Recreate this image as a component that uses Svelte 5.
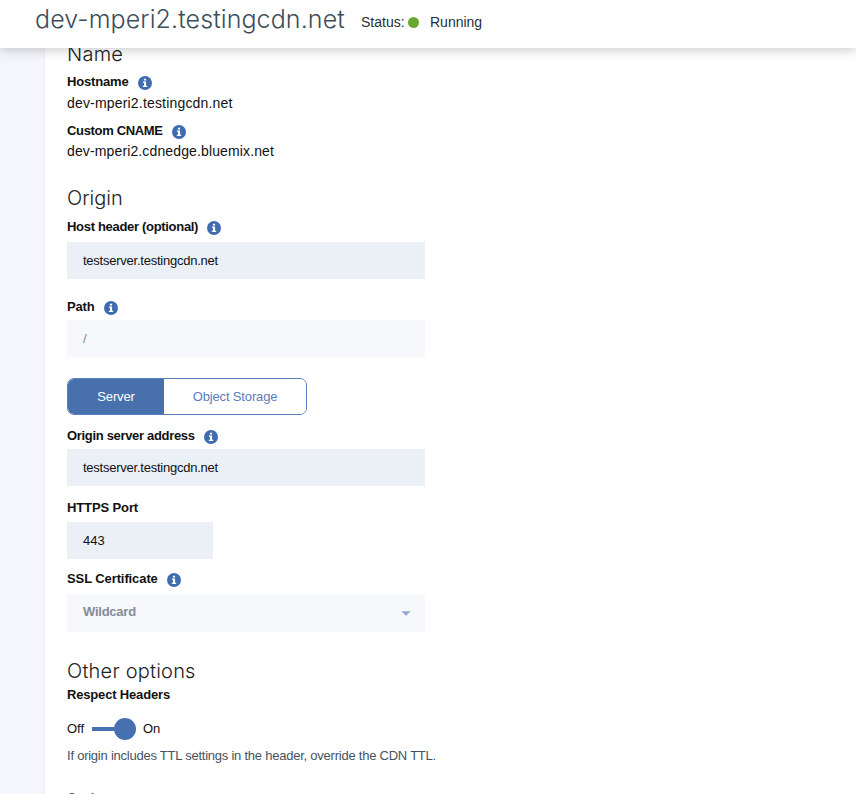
<script>
  const host = 'testserver.testingcdn.net';
</script>

{#snippet info()}
  <svg class="info" viewBox="0 0 14 14" aria-hidden="true">
    <circle cx="7" cy="7" r="7" fill="#3f6cb1" />
    <path d="M5.9 2.7h2.2v1.8H5.9zM4.9 5.6h3.2v4.2h1.1v1.2H4.8V9.8H6V6.8H4.9z" fill="#fff" />
  </svg>
{/snippet}

{#snippet label(text, spacing, mt, icon = true)}
  <div class="label" style:margin-top="{mt}px">
    <span style:letter-spacing="{spacing}px">{text}</span>
    {#if icon}{@render info()}{/if}
  </div>
{/snippet}

<div class="page">
  <header>
    <h1>dev-mperi2.testingcdn.net</h1>
    <span class="status">Status:</span><i class="dot"></i><span class="running">Running</span>
  </header>
  <div class="body">
    <aside></aside>
    <main>
      <h2 class="name">Name</h2>
      {@render label('Hostname', -0.16, 6)}
      <p class="value first">dev-mperi2.testingcdn.net</p>
      {@render label('Custom CNAME', -0.33, 8)}
      <p class="value second">dev-mperi2.cdnedge.bluemix.net</p>

      <h2 class="origin">Origin</h2>
      {@render label('Host header (optional)', -0.31, 7)}
      <div class="field a"><span>{host}</span></div>
      {@render label('Path', -0.15, 18)}
      <div class="field pale b"><span>/</span></div>

      <div class="tabs">
        <button class="active">Server</button>
        <button>Object Storage</button>
      </div>

      {@render label('Origin server address', -0.32, 11)}
      <div class="field b"><span>{host}</span></div>
      {@render label('HTTPS Port', -0.12, 12, false)}
      <div class="field port"><span>443</span></div>
      {@render label('SSL Certificate', -0.1, 10)}
      <div class="field pale select">
        <span>Wildcard</span>
        <svg width="10" height="5" viewBox="0 0 10 5"><path d="M.3 .2h9.4L5 4.8z" fill="#8ea9d4" /></svg>
      </div>

      <h2 class="other">Other options</h2>
      {@render label('Respect Headers', -0.17, 2, false)}
      <div class="toggle"><span>Off</span><i class="track"></i><i class="knob"></i><span class="on">On</span></div>
      <p class="help">If origin includes TTL settings in the header, override the CDN TTL.</p>
      <div class="label next">Cache</div>
    </main>
  </div>
</div>

<style>
  :global(body) { margin: 0; overflow: hidden; }
  .page { width: 856px; height: 794px; overflow: hidden; background: #fff; color: #111; font: 13px/20px "Liberation Sans", Arial, sans-serif; }
  header { position: relative; z-index: 1; box-sizing: border-box; height: 48px; padding-left: 35px; display: flex; background: #fff; box-shadow: 0 1px 12px rgba(0, 0, 0, .24); white-space: nowrap; }
  h1 { margin: 3px 0 0; width: 326px; font: 300 25px/32px Inter, sans-serif; letter-spacing: .1px; color: #3c4d5c; }
  .status, .running { margin-top: 12px; font-size: 14px; line-height: 21px; color: #26303a; }
  .status { width: 47px; }
  .dot { width: 11px; height: 11px; border-radius: 50%; margin-top: 17px; background: #69a82f; }
  .running { margin-left: 11px; }
  .body { display: flex; height: 746px; }
  aside { box-sizing: border-box; width: 45px; background: #f4f6fb; border-right: 1px solid #eef0f5; }
  main { flex: 1; height: 752px; margin-top: -6px; padding-left: 22px; white-space: nowrap; }
  h2 { margin: 0; height: 24px; font: 300 20px/24px Inter, sans-serif; color: #222; }
  .name { letter-spacing: .25px; }
  .label { display: flex; height: 20px; font-size: 13px; font-weight: bold; }
  .info { width: 14px; height: 14px; margin: 4px 0 0 9.3px; }
  p { margin: 0; }
  .value { font-size: 14px; margin-top: 1px; letter-spacing: .18px; }
  .second { margin-top: 0; letter-spacing: .13px; }
  .origin { margin-top: 25px; }
  .field { display: flex; align-items: center; box-sizing: border-box; width: 358px; height: 37px; padding: 1px 14px 0 16px; background: #ebf0f7; }
  .field span { letter-spacing: -.24px; }
  .a { margin-top: 5px; }
  .b { margin-top: 3px; }
  .pale { background: #f6f8fc; color: #7d858c; }
  .port { width: 146px; margin-top: 4px; }
  .port span { letter-spacing: 0; }
  .select { height: 38px; margin-top: 5px; padding-top: 0; padding-bottom: 2px; justify-content: space-between; font-weight: bold; color: #858d94; }
  .select svg { margin-top: 3px; }
  .tabs { display: flex; box-sizing: border-box; width: 240px; height: 37px; margin-top: 21px; border: 1px solid #5a80bc; border-radius: 7px; overflow: hidden; }
  button { flex: 1; padding: 0; border: 0; background: #fff; color: #5b7dbb; font: 13px "Liberation Sans", sans-serif; letter-spacing: -.15px; }
  .active { flex: 0 0 96px; background: #4770ad; color: #fff; }
  .other { margin-top: 27px; letter-spacing: .22px; }
  .toggle { display: flex; align-items: center; height: 22px; margin-top: 13px; }
  .toggle > span:first-child { width: 25px; }
  .track { width: 22px; height: 4px; background: #4770b0; }
  .knob { width: 22px; height: 22px; border-radius: 50%; background: #4770b0; }
  .on { margin-left: 7px; }
  .help { margin-top: 6px; letter-spacing: -.235px; color: #46525c; }
  .next { margin-top: 22px; color: #666; }
</style>
